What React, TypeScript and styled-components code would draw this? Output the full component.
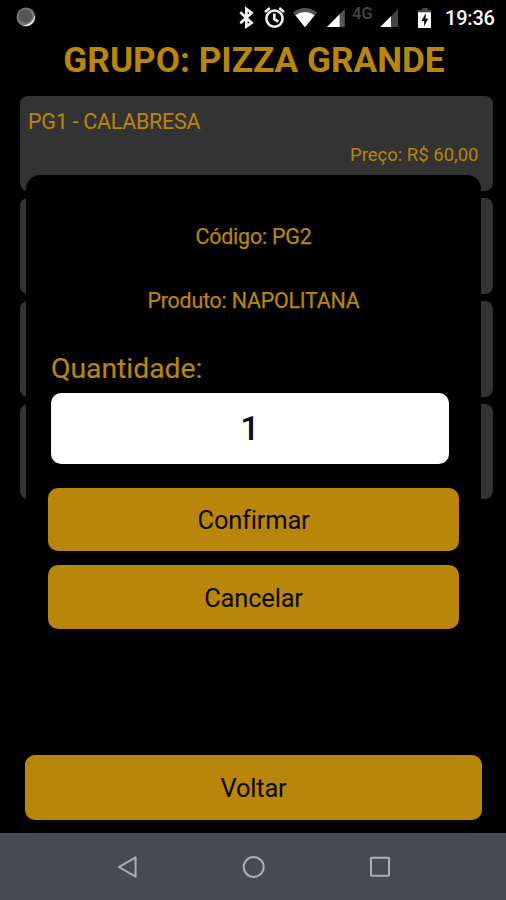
import React from "react";
import styled, { createGlobalStyle } from "styled-components";

const GOLD = "#b8860b";

const GlobalStyle = createGlobalStyle`
  * { box-sizing: border-box; }
  html, body { margin: 0; background: #000; }
  body { font-family: Roboto, "Noto Sans", sans-serif; }
  button, input { font: inherit; border: 0; padding: 0; }
`;

const Screen = styled.main`
  position: relative;
  display: flex;
  flex-direction: column;
  width: 506px;
  height: 900px;
  overflow: hidden;
  background: #000;
  color: ${GOLD};
`;

const StatusBar = styled.header`
  display: flex;
  justify-content: space-between;
  align-items: flex-start;
  height: 36px;
  flex: none;
`;

const StatusIcons = styled.div`
  display: flex;
  align-items: flex-start;
`;

const StatusSvg = styled.svg`
  display: block;
  flex: none;
`;

const NetworkLabel = styled.span`
  width: 26px;
  margin-top: 4px;
  color: #464646;
  font-size: 16.5px;
  font-weight: 500;
  line-height: 20px;
`;

const Clock = styled.time`
  width: 61px;
  margin-top: 6px;
  color: #fff;
  font-size: 20px;
  font-weight: 500;
  line-height: 24px;
  letter-spacing: -0.2px;
  white-space: nowrap;
`;

const Title = styled.h1`
  margin: 0 0 0 2px;
  height: 59.5px;
  flex: none;
  font-size: 35.2px;
  font-weight: 700;
  line-height: 49px;
  text-align: center;
  white-space: nowrap;
`;

const ProductList = styled.ul`
  display: flex;
  flex-direction: column;
  gap: 7px;
  margin: 0 13.5px 0 20px;
  padding: 0;
  list-style: none;
`;

const ProductCard = styled.li`
  display: flex;
  flex-direction: column;
  height: 95.7px;
  padding: 13px 14px 0 8px;
  border-radius: 8px;
  background: #333;
`;

const ProductName = styled.span`
  font-size: 21.5px;
  line-height: 25px;
  letter-spacing: -0.28px;
`;

const ProductPrice = styled.span`
  margin-top: 9px;
  align-self: flex-end;
  font-size: 18.5px;
  line-height: 24px;
`;

const Footer = styled.footer`
  margin-top: auto;
  padding: 0 24px 13.5px 25px;
`;

const ActionButton = styled.button<{ $height: number }>`
  display: block;
  width: 100%;
  height: ${(p) => p.$height}px;
  padding-top: 2px;
  border-radius: 10px;
  background: ${GOLD};
  color: #0c0900;
  font-size: 25.5px;
  line-height: 30px;
  letter-spacing: -0.2px;
  text-align: center;
`;

const NavigationBar = styled.nav`
  display: flex;
  justify-content: center;
  gap: 102.5px;
  height: 67px;
  flex: none;
  padding-top: 22px;
  background: #454d52;
`;

const NavSvg = styled.svg`
  display: block;
  width: 24px;
  height: 24px;
  fill: none;
  stroke: #a9afb2;
  stroke-width: 2;
  stroke-linejoin: round;
`;

const Dialog = styled.section`
  position: absolute;
  top: 175px;
  left: 26px;
  display: flex;
  flex-direction: column;
  width: 455px;
  height: 497px;
  padding: 49px 22px 0;
  border-radius: 14px;
  background: #000;
`;

const Detail = styled.p`
  height: 26px;
  margin: 0 0 38px;
  font-size: 21.4px;
  line-height: 26px;
  letter-spacing: -0.2px;
  -webkit-text-stroke: 0.25px ${GOLD};
  text-align: center;
  white-space: nowrap;
`;

const QuantityLabel = styled.label`
  margin: 0 0 6.5px 3px;
  font-size: 28.3px;
  line-height: 34px;
  -webkit-text-stroke: 0.2px ${GOLD};
`;

const QuantityInput = styled.input`
  width: 398px;
  height: 71px;
  margin: 0 0 24px 3px;
  border-radius: 10px;
  background: #fff;
  color: #111;
  font-size: 34px;
  font-weight: 500;
  text-align: center;
  outline: none;
`;

const DialogActions = styled.div`
  display: flex;
  flex-direction: column;
  gap: 14px;
`;

const products = [
  { code: "PG1", name: "CALABRESA", price: "60,00" },
  { code: "PG2", name: "NAPOLITANA", price: "60,00" },
  { code: "PG3", name: "", price: "" },
  { code: "PG4", name: "", price: "" },
];

export default function App() {
  return (
    <>
      <GlobalStyle />
      <Screen>
        <StatusBar>
          <StatusSvg width="50" height="36" viewBox="0 0 50 36">
            <circle cx="26" cy="17" r="9.5" fill="#777" />
            <circle cx="25.3" cy="16" r="6.8" fill="#555" />
            <path d="M34.8 15.5A9.4 9.4 0 0 1 22.5 25.6Q32.5 24.5 34.8 15.5Z" fill="#eee" />
          </StatusSvg>
          <StatusIcons>
            <StatusSvg width="122" height="36" viewBox="230 0 122 36">
              <path
                d="M240.3 12.3 251.6 22.8 246.4 26.4V9L251.6 12.8 240.3 23.2"
                fill="none"
                stroke="#f2f2f2"
                strokeWidth="2.7"
              />
              <g fill="none" stroke="#f2f2f2" strokeWidth="2.6">
                <circle cx="274.5" cy="18.6" r="8.1" />
                <path d="M274.3 13.5v5.7l4 2.5M265 11.9l4.8-3.8M284 11.9l-4.8-3.8" />
              </g>
              <path d="M293 12.6Q305 3.6 317 12.6L305 27.3Z" fill="#555" />
              <path d="M295.4 15.2Q305 8.6 314.6 15.2L305 27.3Z" fill="#fff" />
              <path d="M344.8 9V27H327Z" fill="#555" />
              <path d="M339.6 14.2V27H327Z" fill="#fff" />
            </StatusSvg>
            <NetworkLabel>4G</NetworkLabel>
            <StatusSvg width="67" height="36" viewBox="378 0 67 36">
              <path d="M398 9V27H380.3Z" fill="#444" />
              <path d="M391 16.2V27H380.3Z" fill="#fff" />
              <path d="M422 8h6v2h3v3H418v-3h4Z" fill="#444" />
              <path d="M418 12.3h13V28H418Z" fill="#fff" />
              <path d="M425.7 13 421.5 21h2.6v5.5l4.1-8h-2.5Z" fill="#111" />
            </StatusSvg>
            <Clock>19:36</Clock>
          </StatusIcons>
        </StatusBar>

        <Title>GRUPO: PIZZA GRANDE</Title>

        <ProductList>
          {products.map((product, index) => (
            <ProductCard key={product.code}>
              {index === 0 && (
                <>
                  <ProductName>
                    {product.code} - {product.name}
                  </ProductName>
                  <ProductPrice>Preço: R$ {product.price}</ProductPrice>
                </>
              )}
            </ProductCard>
          ))}
        </ProductList>

        <Footer>
          <ActionButton $height={64.5}>Voltar</ActionButton>
        </Footer>

        <NavigationBar>
          <NavSvg viewBox="0 0 24 24">
            <path d="M3.9 12 20.6 2.3V21.7Z" />
          </NavSvg>
          <NavSvg viewBox="0 0 24 24">
            <circle cx="12.7" cy="12" r="10" />
          </NavSvg>
          <NavSvg viewBox="0 0 24 24">
            <rect x="3" y="2.8" width="18" height="18" rx="0.5" />
          </NavSvg>
        </NavigationBar>

        <Dialog role="dialog">
          <Detail>Código: PG2</Detail>
          <Detail>Produto: NAPOLITANA</Detail>
          <QuantityLabel htmlFor="quantity">Quantidade:</QuantityLabel>
          <QuantityInput id="quantity" defaultValue="1" />
          <DialogActions>
            <ActionButton $height={63.5}>Confirmar</ActionButton>
            <ActionButton $height={63.5}>Cancelar</ActionButton>
          </DialogActions>
        </Dialog>
      </Screen>
    </>
  );
}
